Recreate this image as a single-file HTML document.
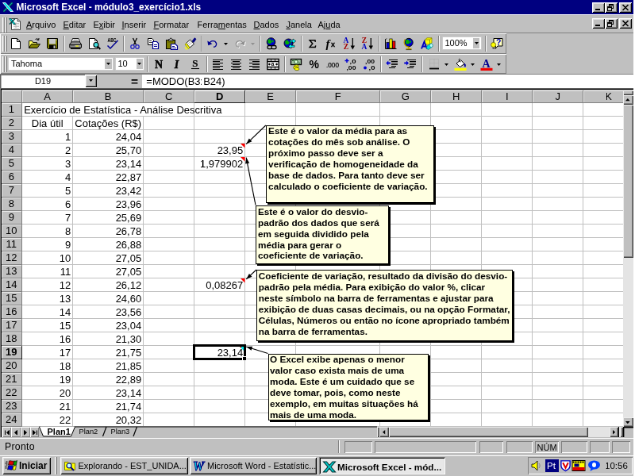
<!DOCTYPE html><html><head><meta charset="utf-8"><title>Microsoft Excel - módulo3_exercício1.xls</title><style>
*{box-sizing:border-box;margin:0;padding:0}
html,body{width:635px;height:476px;overflow:hidden;background:#c0c0c0}
#root{position:absolute;left:0;top:0;width:800px;height:600px;background:#c0c0c0;will-change:transform;transform-origin:0 0;transform:scale(0.79375,0.79333);font-family:"Liberation Sans",sans-serif;font-size:11px;color:#000;overflow:hidden}
.a{position:absolute}
.t{position:absolute;white-space:nowrap;line-height:13px}
.ui{font-size:11px}
.cell{position:absolute;white-space:nowrap;font-size:13px;line-height:17px;height:17px}
.hdr{position:absolute;background:#c0c0c0;border-right:1px solid #808080;border-bottom:1px solid #808080;font-size:13px;line-height:15px;text-align:center;box-shadow:inset 1px 1px 0 #e8e8e8}
.btn{position:absolute;background:#c0c0c0;box-shadow:inset 1px 1px 0 #fff, inset -1px -1px 0 #000, inset 2px 2px 0 #dfdfdf, inset -2px -2px 0 #808080}
.sunk{position:absolute;box-shadow:inset 1px 1px 0 #808080, inset -1px -1px 0 #fff}
.sunk2{position:absolute;box-shadow:inset 1px 1px 0 #808080, inset -1px -1px 0 #fff, inset 2px 2px 0 #000, inset -2px -2px 0 #dfdfdf}
.sep{position:absolute;width:2px;border-left:1px solid #808080;border-right:1px solid #fff}
.grip{position:absolute;width:3px;border-left:1px solid #fff;border-right:1px solid #808080;background:#c0c0c0}
.note{position:absolute;background:#ffffe1;border:1px solid #000;box-shadow:2px 2px 0 #000;font-weight:bold;font-size:11.75px;line-height:13.92px;white-space:nowrap}
.note div{position:absolute;left:2.3px;top:-1px}
u{text-decoration:underline}
svg{position:absolute;overflow:visible}
</style></head><body><div id="root">
<div class="a" style="left:0;top:0;width:800px;height:17.9px;background:#000080"></div>
<svg style="left:2px;top:1px" width="16" height="16" viewBox="0 0 16 16"><path d="M2.500 13.500 L13.500 2.500" stroke="#003838" stroke-width="2.600"/><path d="M2.500 13.500 L13.500 2.500" stroke="#00a0a0" stroke-width="1.300"/><path d="M1.500 2.500 L5 2.500 L14.500 13.500 L11 13.500 Z" fill="#00e8e8" stroke="#e8ffff" stroke-width="0.900"/></svg>
<div class="t" style="left:20.5px;top:2px;color:#fff;font-weight:bold;font-size:11.9px;line-height:14px">Microsoft Excel - módulo3_exercício1.xls</div>
<div class="btn" style="left:746.3px;top:2.5px;width:16px;height:13.0px"></div>
<div class="btn" style="left:762.3px;top:2.5px;width:16px;height:13.0px"></div>
<div class="btn" style="left:780.3px;top:2.5px;width:16px;height:13.0px"></div>
<div class="a" style="left:750.3px;top:10.5px;width:6px;height:2px;background:#000"></div>
<div class="a" style="left:767.3px;top:4.5px;width:6px;height:6px;border:1px solid #000;border-top-width:2px"></div>
<div class="a" style="left:765.3px;top:7.5px;width:6px;height:6px;border:1px solid #000;border-top-width:2px;background:#c0c0c0"></div>
<svg style="left:784.3px;top:5.5px" width="8" height="7" viewBox="0 0 8 7"><path d="M0.5 0 L7.5 7 M7.5 0 L0.5 7" stroke="#000" stroke-width="1.6" fill="none"/></svg>
<div class="a" style="left:0.00px;top:18.30px;width:800.00px;height:1.00px;background:#fff;"></div>
<div class="grip" style="left:3px;top:22px;height:19px"></div>
<div class="grip" style="left:6px;top:22px;height:19px"></div>
<svg style="left:11px;top:22px" width="16" height="16" viewBox="0 0 16 16"><path d="M3.500 1.500 L11 1.500 L14.500 5 L14.500 15.500 L3.500 15.500 Z" fill="#fff" stroke="#303030" stroke-width="0.900"/><path d="M11 1.500 L11 5 L14.500 5" fill="#c0c0c0" stroke="#303030" stroke-width="0.800"/><path d="M6 7.500h7M6 9.500h7M6 11.500h7M6 13.500h7M9 6v8" stroke="#b0b0b0" stroke-width="0.800"/><path d="M0.500 1.500 L3 1.500 L8.500 8.500 L6 8.500 Z" fill="#00e0e0" stroke="#004848" stroke-width="0.800"/><path d="M1 8.500 L8 1.500" stroke="#004848" stroke-width="1.500"/></svg>
<div class="t ui" style="left:33.0px;top:25px"><u>A</u>rquivo</div>
<div class="t ui" style="left:79.5px;top:25px"><u>E</u>ditar</div>
<div class="t ui" style="left:117.5px;top:25px">E<u>x</u>ibir</div>
<div class="t ui" style="left:153.5px;top:25px"><u>I</u>nserir</div>
<div class="t ui" style="left:193.5px;top:25px"><u>F</u>ormatar</div>
<div class="t ui" style="left:248.5px;top:25px">Ferra<u>m</u>entas</div>
<div class="t ui" style="left:319.5px;top:25px"><u>D</u>ados</div>
<div class="t ui" style="left:360.5px;top:25px"><u>J</u>anela</div>
<div class="t ui" style="left:400.5px;top:25px">Aj<u>u</u>da</div>
<div class="btn" style="left:746.3px;top:22.5px;width:16px;height:13.0px"></div>
<div class="btn" style="left:762.3px;top:22.5px;width:16px;height:13.0px"></div>
<div class="btn" style="left:780.3px;top:22.5px;width:16px;height:13.0px"></div>
<div class="a" style="left:750.3px;top:30.5px;width:6px;height:2px;background:#000"></div>
<div class="a" style="left:767.3px;top:24.5px;width:6px;height:6px;border:1px solid #000;border-top-width:2px"></div>
<div class="a" style="left:765.3px;top:27.5px;width:6px;height:6px;border:1px solid #000;border-top-width:2px;background:#c0c0c0"></div>
<svg style="left:784.3px;top:25.5px" width="8" height="7" viewBox="0 0 8 7"><path d="M0.5 0 L7.5 7 M7.5 0 L0.5 7" stroke="#000" stroke-width="1.6" fill="none"/></svg>
<div class="a" style="left:0.00px;top:41.00px;width:800.00px;height:1.00px;background:#808080;"></div>
<div class="a" style="left:0px;top:42px;width:638px;height:26px;box-shadow:inset 1px 1px 0 #fff, inset -1px -1px 0 #808080"></div>
<div class="a" style="left:0px;top:68px;width:638px;height:25px;box-shadow:inset 1px 1px 0 #fff, inset -1px -1px 0 #808080"></div>
<div class="grip" style="left:3px;top:45px;height:20px"></div>
<div class="grip" style="left:6px;top:45px;height:20px"></div>
<div class="grip" style="left:3px;top:71px;height:20px"></div>
<div class="grip" style="left:6px;top:71px;height:20px"></div>
<svg style="left:12.0px;top:47.0px" width="16" height="16" viewBox="0 0 16 16"><path d="M2.500 1.500 L9.500 1.500 L13.500 5.500 L13.500 14.500 L2.500 14.500 Z" fill="#fff" stroke="#000"/><path d="M9.500 1.500 L9.500 5.500 L13.500 5.500" fill="none" stroke="#000"/></svg>
<svg style="left:35.0px;top:47.0px" width="16" height="16" viewBox="0 0 16 16"><path d="M1.500 4.500 L1.500 13.500 L11.500 13.500 L11.500 6.500 L6.500 6.500 L5.500 4.500 Z" fill="#ffff60" stroke="#000" stroke-width="0.9"/><path d="M1.500 13.500 L4.500 8.500 L15.500 8.500 L12 13.500 Z" fill="#808000" stroke="#000" stroke-width="0.9"/><path d="M9.500 3 C10.500 1.300 12.500 1.300 13.500 3.200 M14 1 L13.700 3.600 L11.300 3.200" fill="none" stroke="#000" stroke-width="1"/></svg>
<svg style="left:58.0px;top:47.0px" width="16" height="16" viewBox="0 0 16 16"><path d="M1.500 1.500 L14.500 1.500 L14.500 14.500 L2.500 14.500 L1.500 13.500 Z" fill="#808000" stroke="#000"/><rect x="4" y="2" width="8" height="6.500" fill="#c8c8c8"/><rect x="12.500" y="2.500" width="1" height="1.500" fill="#c0c0c0"/><rect x="4" y="9.500" width="8.500" height="5" fill="#000"/><rect x="9.500" y="10.500" width="2" height="3.500" fill="#c0c0c0"/></svg>
<div class="sep" style="left:80px;top:45px;height:20px"></div>
<svg style="left:87.0px;top:47.0px" width="16" height="16" viewBox="0 0 16 16"><path d="M4.500 1.500 L12 1.500 L13.500 6 L3 6 Z" fill="#fff" stroke="#000" stroke-width="0.9"/><path d="M5.500 3.200h5.500M5.200 4.600h6.300" stroke="#808080" stroke-width="0.8"/><path d="M3 6 L13.500 6 L15.500 9 L0.800 9 Z" fill="#c0c0c0" stroke="#000" stroke-width="0.9"/><path d="M0.800 9 L15.500 9 L15.500 13 L0.800 13 Z" fill="#a0a0a0" stroke="#000" stroke-width="1"/><path d="M2 14.200 L14.500 14.200" stroke="#000" stroke-width="1.600"/><rect x="8.500" y="10.500" width="3.500" height="1.200" fill="#ffff00"/><path d="M2 10.700 h5" stroke="#404040" stroke-width="0.8"/></svg>
<svg style="left:110.0px;top:47.0px" width="16" height="16" viewBox="0 0 16 16"><path d="M2.500 1.500 L9.500 1.500 L12.500 4.500 L12.500 14.500 L2.500 14.500 Z" fill="#fff" stroke="#000"/><path d="M9.500 1.500 L9.500 4.500 L12.500 4.500" fill="none" stroke="#000" stroke-width="0.8"/><circle cx="11" cy="9.500" r="3" fill="#40e0e0" stroke="#000" stroke-width="1.100"/><path d="M13.200 11.800 L16.300 15" stroke="#000" stroke-width="2"/></svg>
<svg style="left:133.0px;top:47.0px" width="16" height="16" viewBox="0 0 16 16"><text x="2.500" y="6.500" font-size="6.500" font-family="Liberation Sans,sans-serif" font-weight="bold" fill="#000" textLength="11" lengthAdjust="spacingAndGlyphs">ABC</text><path d="M2.500 10.500 L6 14 L15.500 4" fill="none" stroke="#000090" stroke-width="1.500"/></svg>
<div class="sep" style="left:155px;top:45px;height:20px"></div>
<svg style="left:162.0px;top:47.0px" width="16" height="16" viewBox="0 0 16 16"><path d="M5.500 1 L9.500 9.500 M10.500 1 L6.500 9.500" stroke="#000" stroke-width="1.300" fill="none"/><ellipse cx="5" cy="12" rx="2.200" ry="2.300" fill="none" stroke="#2020c0" stroke-width="1.300"/><ellipse cx="11" cy="12" rx="2.200" ry="2.300" fill="none" stroke="#2020c0" stroke-width="1.300"/></svg>
<svg style="left:185.0px;top:47.0px" width="16" height="16" viewBox="0 0 16 16"><path d="M1.500 1.500 L6.500 1.500 L8.500 3.500 L8.500 9.500 L1.500 9.500 Z" fill="#fff" stroke="#000"/><path d="M3 4.500h3M3 6.500h4" stroke="#000" stroke-width="0.800"/><path d="M7.500 5.500 L12.500 5.500 L14.500 7.500 L14.500 14.500 L7.500 14.500 Z" fill="#fff" stroke="#000090" stroke-width="1.200"/><path d="M9 9.500h4M9 11.500h4" stroke="#000090"/></svg>
<svg style="left:208.0px;top:47.0px" width="16" height="16" viewBox="0 0 16 16"><path d="M1.500 3.500 L12.500 3.500 L12.500 14.500 L1.500 14.500 Z" fill="#808000" stroke="#000" stroke-width="1.100"/><path d="M4.500 4.500 L4.500 2.500 L6 2.500 L6.500 1.200 L8 1.200 L8.500 2.500 L10 2.500 L10 4.500 Z" fill="#c0c0c0" stroke="#000" stroke-width="0.800"/><path d="M3 6h7" stroke="#505000" stroke-width="0.800"/><path d="M7.500 8.500 L13 8.500 L15.500 11 L15.500 15.500 L7.500 15.500 Z" fill="#fff" stroke="#000090" stroke-width="1.200"/><path d="M9 11.500h3M9 13.500h5" stroke="#000090"/></svg>
<svg style="left:231.0px;top:47.0px" width="16" height="16" viewBox="0 0 16 16"><path d="M11 5 L14.200 0.800 L16 2.200 L13 6.500 Z" fill="#000080" stroke="#000080" stroke-width="0.800"/><path d="M3.500 7.500 L8.500 3 L13.500 8.500 L8 13 Z" fill="#fff" stroke="#000" stroke-width="0.900"/><path d="M5 9 L9.500 5 M6.500 10.500 L11 6.500" stroke="#808080" stroke-width="0.700"/><path d="M3.500 7.500 L8 13 L6.500 14.500 L2 9 Z" fill="#ffff00" stroke="#808000" stroke-width="0.800"/><path d="M2 12.500 L5 15.500" stroke="#ffff00" stroke-width="1.400"/></svg>
<div class="sep" style="left:253px;top:45px;height:20px"></div>
<svg style="left:260.0px;top:47.0px" width="16" height="16" viewBox="0 0 16 16"><path d="M3.500 8.500 C5 3.500 11 3.500 12.500 7.500 C13.200 10 11.500 12.200 9 12.300" fill="none" stroke="#000090" stroke-width="1.400"/><path d="M1.300 4.500 L2.300 10.200 L7.500 8.300 Z" fill="#000090"/></svg>
<svg style="left:282.0px;top:54.0px" width="5" height="3" viewBox="0 0 5 3"><path d="M0 0 L5 0 L2.5 3 Z" fill="#000"/></svg>
<svg style="left:294.0px;top:47.0px" width="16" height="16" viewBox="0 0 16 16"><path d="M13.500 9.500 C12 4.500 6 4.500 4.500 8.500 C3.800 11 5.500 13.200 8 13.300" fill="none" stroke="#fff" stroke-width="1.400"/><path d="M15.700 5.500 L14.700 11.200 L9.500 9.300 Z" fill="#fff"/><path d="M12.500 8.500 C11 3.500 5 3.500 3.500 7.500 C2.800 10 4.500 12.200 7 12.300" fill="none" stroke="#909090" stroke-width="1.400"/><path d="M14.700 4.500 L13.700 10.200 L8.500 8.300 Z" fill="#909090"/></svg>
<svg style="left:316.0px;top:54.0px" width="5" height="3" viewBox="0 0 5 3"><path d="M0 0 L5 0 L2.5 3 Z" fill="#909090"/></svg>
<div class="sep" style="left:327px;top:45px;height:20px"></div>
<svg style="left:334.0px;top:47.0px" width="16" height="16" viewBox="0 0 16 16"><circle cx="7.5" cy="6" r="5.3" fill="#0000d0" stroke="#000" stroke-width="0.9"/><path d="M4.585 2.714 c1.8 -1.2 3.6 0.2 3 2 c2 0.6 0.4 3.400 -1.400 3 c-1.400 0.8 -3.200 -0.6 -2.600 -2.200 c-0.8 -1 -0.2 -2.200 1 -2.800 Z" fill="#00b000"/><path d="M8.825 3.085 l2 1.300 l-0.500 2.400 l-1.700 -1.200 Z" fill="#00b000"/><rect x="3" y="10.500" width="6" height="4.200" rx="1.800" fill="#c0c0c0" stroke="#000" stroke-width="1.300"/><rect x="8" y="10.500" width="6" height="4.200" rx="1.800" fill="#c0c0c0" stroke="#000" stroke-width="1.300"/></svg>
<svg style="left:357.0px;top:47.0px" width="16" height="16" viewBox="0 0 16 16"><circle cx="6.5" cy="7.5" r="5.5" fill="#0000d0" stroke="#000" stroke-width="0.9"/><path d="M3.475 4.09 c1.8 -1.2 3.6 0.2 3 2 c2 0.6 0.4 3.400 -1.400 3 c-1.400 0.8 -3.200 -0.6 -2.600 -2.200 c-0.8 -1 -0.2 -2.200 1 -2.800 Z" fill="#00b000"/><path d="M7.875 4.475 l2 1.300 l-0.500 2.400 l-1.700 -1.200 Z" fill="#00b000"/><path d="M8 3.800 L12 3.800 L12 2 L15.800 4.800 L12 7.600 L12 5.800 L8 5.800 Z" fill="#00ffff" stroke="#000" stroke-width="0.600"/><path d="M14 10.300 L10 10.300 L10 8.500 L6.200 11.300 L10 14.100 L10 12.300 L14 12.300 Z" fill="#00ffff" stroke="#000" stroke-width="0.600"/></svg>
<div class="sep" style="left:379px;top:45px;height:20px"></div>
<svg style="left:386.0px;top:47.0px" width="16" height="16" viewBox="0 0 16 16"><path d="M11.300 5.800 L11 3.800 L4.200 3.800 L7.800 8 L4.200 12.400 L11.200 12.400 L11.700 10.300" fill="none" stroke="#000" stroke-width="1.500" stroke-linejoin="miter"/></svg>
<svg style="left:409.0px;top:47.0px" width="16" height="16" viewBox="0 0 16 16"><text x="1.500" y="12.500" font-size="15" font-family="Liberation Serif,serif" font-style="italic" font-weight="bold" fill="#000">f</text><text x="8" y="12.500" font-size="9" font-family="Liberation Sans,sans-serif" font-weight="bold" fill="#000" stroke="#000" stroke-width="0.300">x</text></svg>
<svg style="left:432.0px;top:47.0px" width="16" height="16" viewBox="0 0 16 16"><text x="0.500" y="7.300" font-size="9.500" font-family="Liberation Serif,serif" font-weight="bold" fill="#0000c0">A</text><text x="0.800" y="15.300" font-size="9.500" font-family="Liberation Serif,serif" font-weight="bold" fill="#a00000">Z</text><path d="M12.300 1 L12.300 12" stroke="#000" stroke-width="1.300"/><path d="M9.600 10.500 L15 10.500 L12.300 15.500 Z" fill="#000"/></svg>
<svg style="left:455.0px;top:47.0px" width="16" height="16" viewBox="0 0 16 16"><text x="0.800" y="7.300" font-size="9.500" font-family="Liberation Serif,serif" font-weight="bold" fill="#a00000">Z</text><text x="0.500" y="15.300" font-size="9.500" font-family="Liberation Serif,serif" font-weight="bold" fill="#0000c0">A</text><path d="M12.300 1 L12.300 12" stroke="#000" stroke-width="1.300"/><path d="M9.600 10.500 L15 10.500 L12.300 15.500 Z" fill="#000"/></svg>
<div class="sep" style="left:477px;top:45px;height:20px"></div>
<svg style="left:484.0px;top:47.0px" width="16" height="16" viewBox="0 0 16 16"><path d="M1.500 3 L3 1.500 M1.500 2.500 L1.500 14.500 L15.500 14.500" stroke="#000" fill="none"/><rect x="3" y="6.500" width="3.300" height="7.500" fill="#0000d0" stroke="#000" stroke-width="0.700"/><rect x="6.800" y="2" width="3.300" height="12" fill="#ffff00" stroke="#000" stroke-width="0.700"/><rect x="10.600" y="5" width="3.300" height="9" fill="#f00000" stroke="#000" stroke-width="0.700"/></svg>
<svg style="left:507.0px;top:47.0px" width="16" height="16" viewBox="0 0 16 16"><circle cx="8" cy="6.5" r="5.2" fill="#0000d0" stroke="#000" stroke-width="0.9"/><path d="M5.14 3.276 c1.8 -1.2 3.6 0.2 3 2 c2 0.6 0.4 3.400 -1.400 3 c-1.400 0.8 -3.200 -0.6 -2.600 -2.200 c-0.8 -1 -0.2 -2.200 1 -2.800 Z" fill="#00b000"/><path d="M9.3 3.64 l2 1.300 l-0.500 2.400 l-1.700 -1.200 Z" fill="#00b000"/><path d="M3.200 2.500 C0.800 7 3 12 8.500 12.300" fill="none" stroke="#c0a000" stroke-width="1.300"/><path d="M8 12 L8 14" stroke="#c0a000" stroke-width="2"/><path d="M4.500 14.700 L11.500 14.700" stroke="#c0a000" stroke-width="1.800"/><path d="M4.500 15.600 L11.500 15.600" stroke="#000" stroke-width="0.600"/></svg>
<svg style="left:530.0px;top:47.0px" width="16" height="16" viewBox="0 0 16 16"><path d="M5.500 3 L8 0.800 L14 0.800 L14 7 L11.500 9 L5.500 9 Z" fill="#ffff00" stroke="#808000" stroke-width="0.800"/><path d="M5.500 3 L11.500 3 L11.500 9 M11.500 3 L14 0.800" fill="none" stroke="#808000" stroke-width="0.800"/><path d="M1 14.500 L4.500 5.500 L8 14.500 M2.300 11.500 L6.800 11.500" fill="none" stroke="#0000c0" stroke-width="1.900"/><path d="M8 11 L12.500 8 C15 8 16 11 14 12.500 L9.500 15.500 C7.500 15 7 12.500 8 11 Z" fill="#00e0e0" stroke="#008080" stroke-width="0.700"/><ellipse cx="13.300" cy="10.300" rx="1.800" ry="2.300" fill="#c0ffff" stroke="#008080" stroke-width="0.500"/></svg>
<div class="sep" style="left:552px;top:45px;height:20px"></div>
<div class="a" style="left:557.70px;top:47.00px;width:48.00px;height:14.80px;background:#fff;box-shadow:0 0 0 0.6px #d4d4d4"></div>
<div class="a" style="left:595.90px;top:48.00px;width:8.60px;height:12.80px;background:#c0c0c0;"></div>
<svg style="left:597.7px;top:53.0px" width="5" height="3" viewBox="0 0 5 3"><path d="M0 0 L5 0 L2.5 3 Z" fill="#000"/></svg>
<div class="t" style="left:560.50px;top:48.00px;font-size:11px;line-height:13px">100%</div>
<div class="sep" style="left:611px;top:45px;height:20px"></div>
<svg style="left:617.5px;top:47.0px" width="16" height="16" viewBox="0 0 16 16"><path d="M4 1.500 L15 1.500 L15 11 L9 11 L6 14.500 L6.500 11 L4 11 Z" fill="#ffffc0" stroke="#000" stroke-width="1"/><text x="7" y="9.800" font-size="10.500" font-family="Liberation Sans,sans-serif" font-weight="bold" fill="#0000c0">?</text><circle cx="3.600" cy="9.500" r="3" fill="#ffff00" stroke="#606000" stroke-width="0.800"/><path d="M2.300 12.500 L5 12.500 L4.600 15 L2.700 15 Z" fill="#606060"/></svg>
<div class="a" style="left:11.00px;top:73.00px;width:131.00px;height:14.80px;background:#fff;box-shadow:0 0 0 0.6px #d4d4d4"></div>
<div class="a" style="left:132.20px;top:74.00px;width:8.60px;height:12.80px;background:#c0c0c0;"></div>
<svg style="left:134.0px;top:79.0px" width="5" height="3" viewBox="0 0 5 3"><path d="M0 0 L5 0 L2.5 3 Z" fill="#000"/></svg>
<div class="t" style="left:14.00px;top:74.00px;font-size:11px;line-height:13px">Tahoma</div>
<div class="a" style="left:145.80px;top:73.00px;width:35.60px;height:14.80px;background:#fff;box-shadow:0 0 0 0.6px #d4d4d4"></div>
<div class="a" style="left:171.60px;top:74.00px;width:8.60px;height:12.80px;background:#c0c0c0;"></div>
<svg style="left:173.4px;top:79.0px" width="5" height="3" viewBox="0 0 5 3"><path d="M0 0 L5 0 L2.5 3 Z" fill="#000"/></svg>
<div class="t" style="left:148.50px;top:74.00px;font-size:11px;line-height:13px">10</div>
<div class="sep" style="left:185px;top:71px;height:20px"></div>
<svg style="left:191.5px;top:73.0px" width="16" height="16" viewBox="0 0 16 16"><text x="3" y="12.500" font-size="14" font-family="Liberation Serif,serif" font-weight="bold" fill="#000" stroke="#000" stroke-width="0.500">N</text></svg>
<svg style="left:214.5px;top:73.0px" width="16" height="16" viewBox="0 0 16 16"><text x="4.800" y="12.500" font-size="14" font-family="Liberation Serif,serif" font-weight="bold" font-style="italic" fill="#000" stroke="#000" stroke-width="0.500">I</text></svg>
<svg style="left:237.5px;top:73.0px" width="16" height="16" viewBox="0 0 16 16"><text x="4.300" y="11.500" font-size="13" font-family="Liberation Serif,serif" font-weight="bold" fill="#000" stroke="#000" stroke-width="0.200">S</text><path d="M3 13.500 L13 13.500" stroke="#000" stroke-width="1.100"/></svg>
<div class="sep" style="left:260px;top:71px;height:20px"></div>
<svg style="left:266.5px;top:73.0px" width="16" height="16" viewBox="0 0 16 16"><path d="M1 2.5h13M1 4.5h9M1 6.5h13M1 8.5h9M1 10.5h13M1 12.5h9M1 14.5h13" stroke="#000" stroke-width="1.150"/></svg>
<svg style="left:289.5px;top:73.0px" width="16" height="16" viewBox="0 0 16 16"><path d="M1 2.5h13M3 4.5h9M1 6.5h13M3 8.5h9M1 10.5h13M3 12.5h9M1 14.5h13" stroke="#000" stroke-width="1.150"/></svg>
<svg style="left:312.5px;top:73.0px" width="16" height="16" viewBox="0 0 16 16"><path d="M1 2.5h13M5 4.5h9M1 6.5h13M5 8.5h9M1 10.5h13M5 12.5h9M1 14.5h13" stroke="#000" stroke-width="1.150"/></svg>
<svg style="left:335.5px;top:73.0px" width="16" height="16" viewBox="0 0 16 16"><rect x="0.800" y="1.500" width="14.400" height="13" fill="#fff" stroke="#000" stroke-width="1.400"/><path d="M1 4.500h14M1 11.500h14" stroke="#000" stroke-width="1.300"/><path d="M5.500 1.500v3M10.500 1.500v3M5.500 11.500v3M10.500 11.500v3" stroke="#000" stroke-width="0.800"/><text x="5.800" y="10.300" font-size="6.500" font-family="Liberation Sans,sans-serif" font-weight="bold" fill="#000">a</text><path d="M2 8 L5.300 8 M10.700 8 L14 8" stroke="#000" stroke-width="1.200"/><path d="M4 6.200 L2 8 L4 9.800 Z M12 6.200 L14 8 L12 9.800 Z" fill="#000"/></svg>
<div class="sep" style="left:358px;top:71px;height:20px"></div>
<svg style="left:364.5px;top:73.0px" width="16" height="16" viewBox="0 0 16 16"><rect x="1.500" y="1.500" width="13" height="7" fill="#a0c0a0" stroke="#000" stroke-width="1.300"/><ellipse cx="8" cy="5" rx="2.200" ry="2.300" fill="#e0ffe0" stroke="#004000" stroke-width="0.800"/><path d="M3 3.500h2M11 6.500h2" stroke="#004000" stroke-width="0.800"/><ellipse cx="8.500" cy="10.500" rx="3" ry="1.700" fill="#ffff00" stroke="#606000" stroke-width="0.800"/><ellipse cx="7.500" cy="12.300" rx="3" ry="1.700" fill="#ffff00" stroke="#606000" stroke-width="0.800"/><ellipse cx="9" cy="14" rx="3" ry="1.700" fill="#ffff00" stroke="#606000" stroke-width="0.800"/></svg>
<svg style="left:387.5px;top:73.0px" width="16" height="16" viewBox="0 0 16 16"><text x="1.500" y="13" font-size="14" font-family="Liberation Sans,sans-serif" font-weight="bold" fill="#000">%</text></svg>
<svg style="left:410.5px;top:73.0px" width="16" height="16" viewBox="0 0 16 16"><text x="0" y="12" font-size="9.700" font-family="Liberation Sans,sans-serif" fill="#000" stroke="#000" stroke-width="0.250" textLength="16" lengthAdjust="spacingAndGlyphs">.000</text></svg>
<svg style="left:433.5px;top:73.0px" width="16" height="16" viewBox="0 0 16 16"><text x="6.500" y="7.300" font-size="8" font-family="Liberation Sans,sans-serif" fill="#000" font-weight="bold" textLength="8" lengthAdjust="spacingAndGlyphs">,0</text><text x="2.500" y="15" font-size="8" font-family="Liberation Sans,sans-serif" fill="#000" font-weight="bold" textLength="12" lengthAdjust="spacingAndGlyphs">,00</text><path d="M0.500 3.500 L5.500 3.500 M3 1 L3 6" stroke="#0000d0" fill="none" stroke-width="1.500"/></svg>
<svg style="left:456.5px;top:73.0px" width="16" height="16" viewBox="0 0 16 16"><text x="3" y="7.300" font-size="8" font-family="Liberation Sans,sans-serif" fill="#000" font-weight="bold" textLength="12" lengthAdjust="spacingAndGlyphs">,00</text><text x="7.500" y="15" font-size="8" font-family="Liberation Sans,sans-serif" fill="#000" font-weight="bold" textLength="8" lengthAdjust="spacingAndGlyphs">,0</text><circle cx="3" cy="12.500" r="1.900" fill="#0000d0"/></svg>
<div class="sep" style="left:479px;top:71px;height:20px"></div>
<svg style="left:485.5px;top:73.0px" width="16" height="16" viewBox="0 0 16 16"><path d="M4 2.500h11M7 4.500h8M7 6.500h8M7 8.500h8M7 10.500h6M4 12.500h8" stroke="#000" stroke-width="1.150"/><path d="M0.300 6.500 L3.300 3.500 L3.300 5.500 L6 5.500 L6 7.500 L3.300 7.500 L3.300 9.500 Z" fill="#0000d0"/></svg>
<svg style="left:508.5px;top:73.0px" width="16" height="16" viewBox="0 0 16 16"><path d="M4 2.500h11M7 4.500h8M7 6.500h8M7 8.500h8M7 10.500h6M4 12.500h8" stroke="#000" stroke-width="1.150"/><path d="M6 6.500 L3 3.500 L3 5.500 L0.300 5.500 L0.300 7.500 L3 7.500 L3 9.500 Z" fill="#0000d0"/></svg>
<div class="sep" style="left:531px;top:71px;height:20px"></div>
<svg style="left:539.0px;top:73.0px" width="16" height="16" viewBox="0 0 16 16"><rect x="2.500" y="1.500" width="11" height="10" fill="none" stroke="#a8a8a8" stroke-dasharray="1 1"/><path d="M8 1.500v10M2.500 6.500h11" stroke="#a8a8a8" stroke-dasharray="1 1"/><path d="M2 13.500h12" stroke="#000" stroke-width="1.800"/></svg>
<svg style="left:560.0px;top:80.0px" width="5" height="3" viewBox="0 0 5 3"><path d="M0 0 L5 0 L2.5 3 Z" fill="#000"/></svg>
<svg style="left:572.0px;top:73.0px" width="16" height="16" viewBox="0 0 16 16"><path d="M3 7 L8.500 2.500 L13 7.500 L7.500 11.500 Z" fill="#fff" stroke="#000" stroke-width="1"/><path d="M7 0.800 C5.500 2.500 6.500 4.500 8.500 5" fill="none" stroke="#000" stroke-width="1"/><path d="M13 7 C14.800 7.800 15 10 14 11.500 C13 10.500 12.800 9 13 7 Z" fill="#0000c0" stroke="#000080" stroke-width="0.600"/><rect x="0.500" y="12.800" width="15" height="3.200" fill="#ffff00"/></svg>
<svg style="left:593.0px;top:80.0px" width="5" height="3" viewBox="0 0 5 3"><path d="M0 0 L5 0 L2.5 3 Z" fill="#000"/></svg>
<svg style="left:605.0px;top:73.0px" width="16" height="16" viewBox="0 0 16 16"><text x="2.500" y="11.500" font-size="14" font-family="Liberation Serif,serif" font-weight="bold" fill="#000090">A</text><rect x="0.500" y="12.800" width="15" height="3.200" fill="#f00000"/></svg>
<svg style="left:626.0px;top:80.0px" width="5" height="3" viewBox="0 0 5 3"><path d="M0 0 L5 0 L2.5 3 Z" fill="#000"/></svg>
<div class="a" style="left:0.00px;top:93.00px;width:800.00px;height:1.00px;background:#808080;"></div>
<div class="a" style="left:0.00px;top:94.00px;width:800.00px;height:17.00px;background:#c0c0c0;"></div>
<div class="a" style="left:0.00px;top:94.00px;width:122.00px;height:17.00px;background:#fff;box-shadow:inset 1.5px 1px 0 #606060"></div>
<div class="t" style="left:0;top:96px;width:108px;text-align:center">D19</div>
<div class="btn" style="left:107px;top:94px;width:15px;height:16px"></div>
<svg style="left:112.0px;top:100.0px" width="5" height="3" viewBox="0 0 5 3"><path d="M0 0 L5 0 L2.5 3 Z" fill="#000"/></svg>
<div class="t" style="left:165px;top:95px;font-weight:bold;font-size:15.5px;line-height:15px">=</div>
<div class="a" style="left:179.30px;top:94.00px;width:622.00px;height:17.00px;background:#fff;"></div>
<div class="t" style="left:184.3px;top:95px;font-size:13px;line-height:15px">=MODO(B3:B24)</div>
<div class="a" style="left:0.00px;top:111.00px;width:800.00px;height:1.00px;background:#606060;"></div>
<div class="a" style="left:0.00px;top:112.00px;width:800.00px;height:1.00px;background:#000;"></div>
<div class="a" style="left:0.00px;top:113.50px;width:784.60px;height:424.72px;background:#fff;"></div>
<div class="a" style="left:91.20px;top:129.50px;width:1.00px;height:408.72px;background:#c0c0c0;"></div>
<div class="a" style="left:180.20px;top:129.50px;width:1.00px;height:408.72px;background:#c0c0c0;"></div>
<div class="a" style="left:244.20px;top:129.50px;width:1.00px;height:408.72px;background:#c0c0c0;"></div>
<div class="a" style="left:308.20px;top:129.50px;width:1.00px;height:408.72px;background:#c0c0c0;"></div>
<div class="a" style="left:372.20px;top:129.50px;width:1.00px;height:408.72px;background:#c0c0c0;"></div>
<div class="a" style="left:478.20px;top:129.50px;width:1.00px;height:408.72px;background:#c0c0c0;"></div>
<div class="a" style="left:542.20px;top:129.50px;width:1.00px;height:408.72px;background:#c0c0c0;"></div>
<div class="a" style="left:606.20px;top:129.50px;width:1.00px;height:408.72px;background:#c0c0c0;"></div>
<div class="a" style="left:670.20px;top:129.50px;width:1.00px;height:408.72px;background:#c0c0c0;"></div>
<div class="a" style="left:734.20px;top:129.50px;width:1.00px;height:408.72px;background:#c0c0c0;"></div>
<div class="a" style="left:798.20px;top:129.50px;width:1.00px;height:408.72px;background:#c0c0c0;"></div>
<div class="a" style="left:28.20px;top:145.53px;width:756.40px;height:1.00px;background:#c0c0c0;"></div>
<div class="a" style="left:28.20px;top:162.56px;width:756.40px;height:1.00px;background:#c0c0c0;"></div>
<div class="a" style="left:28.20px;top:179.59px;width:756.40px;height:1.00px;background:#c0c0c0;"></div>
<div class="a" style="left:28.20px;top:196.62px;width:756.40px;height:1.00px;background:#c0c0c0;"></div>
<div class="a" style="left:28.20px;top:213.65px;width:756.40px;height:1.00px;background:#c0c0c0;"></div>
<div class="a" style="left:28.20px;top:230.68px;width:756.40px;height:1.00px;background:#c0c0c0;"></div>
<div class="a" style="left:28.20px;top:247.71px;width:756.40px;height:1.00px;background:#c0c0c0;"></div>
<div class="a" style="left:28.20px;top:264.74px;width:756.40px;height:1.00px;background:#c0c0c0;"></div>
<div class="a" style="left:28.20px;top:281.77px;width:756.40px;height:1.00px;background:#c0c0c0;"></div>
<div class="a" style="left:28.20px;top:298.80px;width:756.40px;height:1.00px;background:#c0c0c0;"></div>
<div class="a" style="left:28.20px;top:315.83px;width:756.40px;height:1.00px;background:#c0c0c0;"></div>
<div class="a" style="left:28.20px;top:332.86px;width:756.40px;height:1.00px;background:#c0c0c0;"></div>
<div class="a" style="left:28.20px;top:349.89px;width:756.40px;height:1.00px;background:#c0c0c0;"></div>
<div class="a" style="left:28.20px;top:366.92px;width:756.40px;height:1.00px;background:#c0c0c0;"></div>
<div class="a" style="left:28.20px;top:383.95px;width:756.40px;height:1.00px;background:#c0c0c0;"></div>
<div class="a" style="left:28.20px;top:400.98px;width:756.40px;height:1.00px;background:#c0c0c0;"></div>
<div class="a" style="left:28.20px;top:418.01px;width:756.40px;height:1.00px;background:#c0c0c0;"></div>
<div class="a" style="left:28.20px;top:435.04px;width:756.40px;height:1.00px;background:#c0c0c0;"></div>
<div class="a" style="left:28.20px;top:452.07px;width:756.40px;height:1.00px;background:#c0c0c0;"></div>
<div class="a" style="left:28.20px;top:469.10px;width:756.40px;height:1.00px;background:#c0c0c0;"></div>
<div class="a" style="left:28.20px;top:486.13px;width:756.40px;height:1.00px;background:#c0c0c0;"></div>
<div class="a" style="left:28.20px;top:503.16px;width:756.40px;height:1.00px;background:#c0c0c0;"></div>
<div class="a" style="left:28.20px;top:520.19px;width:756.40px;height:1.00px;background:#c0c0c0;"></div>
<div class="a" style="left:28.20px;top:537.22px;width:756.40px;height:1.00px;background:#c0c0c0;"></div>
<div class="hdr" style="left:2.00px;top:113.50px;width:25.70px;height:16.00px;"></div>
<div class="hdr" style="left:28.20px;top:113.50px;width:64.00px;height:16.00px;line-height:15px;">A</div>
<div class="hdr" style="left:92.20px;top:113.50px;width:89.00px;height:16.00px;line-height:15px;">B</div>
<div class="hdr" style="left:181.20px;top:113.50px;width:64.00px;height:16.00px;line-height:15px;">C</div>
<div class="hdr" style="left:245.20px;top:113.50px;width:64.00px;height:16.00px;font-weight:bold;border-color:#202020;box-shadow:inset 1px 1px 0 #fff;line-height:15px;">D</div>
<div class="hdr" style="left:309.20px;top:113.50px;width:64.00px;height:16.00px;line-height:15px;">E</div>
<div class="hdr" style="left:373.20px;top:113.50px;width:106.00px;height:16.00px;line-height:15px;">F</div>
<div class="hdr" style="left:479.20px;top:113.50px;width:64.00px;height:16.00px;line-height:15px;">G</div>
<div class="hdr" style="left:543.20px;top:113.50px;width:64.00px;height:16.00px;line-height:15px;">H</div>
<div class="hdr" style="left:607.20px;top:113.50px;width:64.00px;height:16.00px;line-height:15px;">I</div>
<div class="hdr" style="left:671.20px;top:113.50px;width:64.00px;height:16.00px;line-height:15px;">J</div>
<div class="hdr" style="left:735.20px;top:113.50px;width:64.00px;height:16.00px;line-height:15px;">K</div>
<div class="hdr" style="left:2.00px;top:129.50px;width:25.70px;height:17.03px;line-height:16.6px;">1</div>
<div class="hdr" style="left:2.00px;top:146.53px;width:25.70px;height:17.03px;line-height:16.6px;">2</div>
<div class="hdr" style="left:2.00px;top:163.56px;width:25.70px;height:17.03px;line-height:16.6px;">3</div>
<div class="hdr" style="left:2.00px;top:180.59px;width:25.70px;height:17.03px;line-height:16.6px;">4</div>
<div class="hdr" style="left:2.00px;top:197.62px;width:25.70px;height:17.03px;line-height:16.6px;">5</div>
<div class="hdr" style="left:2.00px;top:214.65px;width:25.70px;height:17.03px;line-height:16.6px;">6</div>
<div class="hdr" style="left:2.00px;top:231.68px;width:25.70px;height:17.03px;line-height:16.6px;">7</div>
<div class="hdr" style="left:2.00px;top:248.71px;width:25.70px;height:17.03px;line-height:16.6px;">8</div>
<div class="hdr" style="left:2.00px;top:265.74px;width:25.70px;height:17.03px;line-height:16.6px;">9</div>
<div class="hdr" style="left:2.00px;top:282.77px;width:25.70px;height:17.03px;line-height:16.6px;">10</div>
<div class="hdr" style="left:2.00px;top:299.80px;width:25.70px;height:17.03px;line-height:16.6px;">11</div>
<div class="hdr" style="left:2.00px;top:316.83px;width:25.70px;height:17.03px;line-height:16.6px;">12</div>
<div class="hdr" style="left:2.00px;top:333.86px;width:25.70px;height:17.03px;line-height:16.6px;">13</div>
<div class="hdr" style="left:2.00px;top:350.89px;width:25.70px;height:17.03px;line-height:16.6px;">14</div>
<div class="hdr" style="left:2.00px;top:367.92px;width:25.70px;height:17.03px;line-height:16.6px;">15</div>
<div class="hdr" style="left:2.00px;top:384.95px;width:25.70px;height:17.03px;line-height:16.6px;">16</div>
<div class="hdr" style="left:2.00px;top:401.98px;width:25.70px;height:17.03px;line-height:16.6px;">17</div>
<div class="hdr" style="left:2.00px;top:419.01px;width:25.70px;height:17.03px;line-height:16.6px;">18</div>
<div class="hdr" style="left:2.00px;top:436.04px;width:25.70px;height:17.03px;font-weight:bold;border-color:#202020;box-shadow:inset 1px 1px 0 #fff;line-height:16.6px;">19</div>
<div class="hdr" style="left:2.00px;top:453.07px;width:25.70px;height:17.03px;line-height:16.6px;">20</div>
<div class="hdr" style="left:2.00px;top:470.10px;width:25.70px;height:17.03px;line-height:16.6px;">21</div>
<div class="hdr" style="left:2.00px;top:487.13px;width:25.70px;height:17.03px;line-height:16.6px;">22</div>
<div class="hdr" style="left:2.00px;top:504.16px;width:25.70px;height:17.03px;line-height:16.6px;">23</div>
<div class="hdr" style="left:2.00px;top:521.19px;width:25.70px;height:17.03px;line-height:16.6px;">24</div>
<div class="a" style="left:0.00px;top:111.00px;width:1.00px;height:427.22px;background:#808080;"></div>
<div class="a" style="left:1.00px;top:112.00px;width:1.00px;height:426.22px;background:#000;"></div>
<div class="a" style="left:28.20px;top:129.50px;width:216.00px;height:16.00px;background:#fff;"></div>
<div class="cell" style="left:28.20px;top:129.50px;padding-left:2px;">Exercício de Estatística - Análise Descritiva</div>
<div class="cell" style="left:28.20px;top:146.53px;width:63.00px;text-align:center;">Dia útil</div>
<div class="cell" style="left:92.20px;top:146.53px;width:88.00px;text-align:center;">Cotações (R$)</div>
<div class="cell" style="left:28.20px;top:163.56px;width:63.00px;text-align:right;padding-right:2px;">1</div>
<div class="cell" style="left:92.20px;top:163.56px;width:88.00px;text-align:right;padding-right:2px;">24,04</div>
<div class="cell" style="left:28.20px;top:180.59px;width:63.00px;text-align:right;padding-right:2px;">2</div>
<div class="cell" style="left:92.20px;top:180.59px;width:88.00px;text-align:right;padding-right:2px;">25,70</div>
<div class="cell" style="left:28.20px;top:197.62px;width:63.00px;text-align:right;padding-right:2px;">3</div>
<div class="cell" style="left:92.20px;top:197.62px;width:88.00px;text-align:right;padding-right:2px;">23,14</div>
<div class="cell" style="left:28.20px;top:214.65px;width:63.00px;text-align:right;padding-right:2px;">4</div>
<div class="cell" style="left:92.20px;top:214.65px;width:88.00px;text-align:right;padding-right:2px;">22,87</div>
<div class="cell" style="left:28.20px;top:231.68px;width:63.00px;text-align:right;padding-right:2px;">5</div>
<div class="cell" style="left:92.20px;top:231.68px;width:88.00px;text-align:right;padding-right:2px;">23,42</div>
<div class="cell" style="left:28.20px;top:248.71px;width:63.00px;text-align:right;padding-right:2px;">6</div>
<div class="cell" style="left:92.20px;top:248.71px;width:88.00px;text-align:right;padding-right:2px;">23,96</div>
<div class="cell" style="left:28.20px;top:265.74px;width:63.00px;text-align:right;padding-right:2px;">7</div>
<div class="cell" style="left:92.20px;top:265.74px;width:88.00px;text-align:right;padding-right:2px;">25,69</div>
<div class="cell" style="left:28.20px;top:282.77px;width:63.00px;text-align:right;padding-right:2px;">8</div>
<div class="cell" style="left:92.20px;top:282.77px;width:88.00px;text-align:right;padding-right:2px;">26,78</div>
<div class="cell" style="left:28.20px;top:299.80px;width:63.00px;text-align:right;padding-right:2px;">9</div>
<div class="cell" style="left:92.20px;top:299.80px;width:88.00px;text-align:right;padding-right:2px;">26,88</div>
<div class="cell" style="left:28.20px;top:316.83px;width:63.00px;text-align:right;padding-right:2px;">10</div>
<div class="cell" style="left:92.20px;top:316.83px;width:88.00px;text-align:right;padding-right:2px;">27,05</div>
<div class="cell" style="left:28.20px;top:333.86px;width:63.00px;text-align:right;padding-right:2px;">11</div>
<div class="cell" style="left:92.20px;top:333.86px;width:88.00px;text-align:right;padding-right:2px;">27,05</div>
<div class="cell" style="left:28.20px;top:350.89px;width:63.00px;text-align:right;padding-right:2px;">12</div>
<div class="cell" style="left:92.20px;top:350.89px;width:88.00px;text-align:right;padding-right:2px;">26,12</div>
<div class="cell" style="left:28.20px;top:367.92px;width:63.00px;text-align:right;padding-right:2px;">13</div>
<div class="cell" style="left:92.20px;top:367.92px;width:88.00px;text-align:right;padding-right:2px;">24,60</div>
<div class="cell" style="left:28.20px;top:384.95px;width:63.00px;text-align:right;padding-right:2px;">14</div>
<div class="cell" style="left:92.20px;top:384.95px;width:88.00px;text-align:right;padding-right:2px;">23,56</div>
<div class="cell" style="left:28.20px;top:401.98px;width:63.00px;text-align:right;padding-right:2px;">15</div>
<div class="cell" style="left:92.20px;top:401.98px;width:88.00px;text-align:right;padding-right:2px;">23,04</div>
<div class="cell" style="left:28.20px;top:419.01px;width:63.00px;text-align:right;padding-right:2px;">16</div>
<div class="cell" style="left:92.20px;top:419.01px;width:88.00px;text-align:right;padding-right:2px;">21,30</div>
<div class="cell" style="left:28.20px;top:436.04px;width:63.00px;text-align:right;padding-right:2px;">17</div>
<div class="cell" style="left:92.20px;top:436.04px;width:88.00px;text-align:right;padding-right:2px;">21,75</div>
<div class="cell" style="left:28.20px;top:453.07px;width:63.00px;text-align:right;padding-right:2px;">18</div>
<div class="cell" style="left:92.20px;top:453.07px;width:88.00px;text-align:right;padding-right:2px;">21,85</div>
<div class="cell" style="left:28.20px;top:470.10px;width:63.00px;text-align:right;padding-right:2px;">19</div>
<div class="cell" style="left:92.20px;top:470.10px;width:88.00px;text-align:right;padding-right:2px;">22,89</div>
<div class="cell" style="left:28.20px;top:487.13px;width:63.00px;text-align:right;padding-right:2px;">20</div>
<div class="cell" style="left:92.20px;top:487.13px;width:88.00px;text-align:right;padding-right:2px;">23,14</div>
<div class="cell" style="left:28.20px;top:504.16px;width:63.00px;text-align:right;padding-right:2px;">21</div>
<div class="cell" style="left:92.20px;top:504.16px;width:88.00px;text-align:right;padding-right:2px;">21,74</div>
<div class="cell" style="left:28.20px;top:521.19px;width:63.00px;text-align:right;padding-right:2px;">22</div>
<div class="cell" style="left:92.20px;top:521.19px;width:88.00px;text-align:right;padding-right:2px;">20,32</div>
<div class="cell" style="left:245.20px;top:180.59px;width:63.00px;text-align:right;padding-right:2px;">23,95</div>
<div class="cell" style="left:245.20px;top:197.62px;width:63.00px;text-align:right;padding-right:2px;">1,979902</div>
<div class="cell" style="left:245.20px;top:350.89px;width:63.00px;text-align:right;padding-right:2px;">0,08267</div>
<div class="cell" style="left:245.20px;top:436.04px;width:63.00px;text-align:right;padding-right:2px;">23,14</div>
<div class="a" style="left:243.20px;top:434.04px;width:67.00px;height:20.03px;border:3px solid #000"></div>
<div class="a" style="left:305.20px;top:449.07px;width:5px;height:5px;background:#000;border:1px solid #fff;border-right:0;border-bottom:0"></div>
<svg style="left:302.70px;top:180.59px" width="5.5" height="5.5" viewBox="0 0 6 6"><path d="M0 0 L6 0 L6 6 Z" fill="#ff0000"/></svg>
<svg style="left:302.70px;top:197.62px" width="5.5" height="5.5" viewBox="0 0 6 6"><path d="M0 0 L6 0 L6 6 Z" fill="#ff0000"/></svg>
<svg style="left:302.70px;top:350.89px" width="5.5" height="5.5" viewBox="0 0 6 6"><path d="M0 0 L6 0 L6 6 Z" fill="#ff0000"/></svg>
<svg style="left:302.20px;top:437.04px" width="5" height="5" viewBox="0 0 5 5"><path d="M0 0 L5 0 L5 5 Z" fill="#00e8e8"/><path d="M0 0 L2 0 L2 2 Z" fill="#ff0000"/></svg>
<div class="a" style="left:784.60px;top:113.50px;width:13.00px;height:424.72px;background:#e4e4e4;"></div>
<div class="btn" style="left:784.60px;top:113.50px;width:13.00px;height:6.00px;box-shadow:inset 1px 1px 0 #ececec, inset -1px -1px 0 #404040, inset -2px -2px 0 #808080;"></div>
<div class="btn" style="left:784.60px;top:119.50px;width:13.00px;height:12.00px;box-shadow:inset 1px 1px 0 #ececec, inset -1px -1px 0 #404040, inset -2px -2px 0 #808080;"></div>
<svg style="left:787.80px;top:124.00px" width="5.6" height="3.2" viewBox="0 0 7 4"><path d="M0 4 L7 4 L3.5 0 Z" fill="#000"/></svg>
<div class="btn" style="left:784.60px;top:131.50px;width:13.00px;height:193.00px;box-shadow:inset 1px 1px 0 #ececec, inset -1px -1px 0 #404040, inset -2px -2px 0 #808080;"></div>
<div class="btn" style="left:784.60px;top:526.22px;width:13.00px;height:12.00px;box-shadow:inset 1px 1px 0 #ececec, inset -1px -1px 0 #404040, inset -2px -2px 0 #808080;"></div>
<svg style="left:787.80px;top:530.72px" width="5.6" height="3.2" viewBox="0 0 7 4"><path d="M0 0 L7 0 L3.5 4 Z" fill="#000"/></svg>
<div class="a" style="left:798.20px;top:0.00px;width:3.00px;height:600.00px;background:#fff;"></div>
<svg style="left:0;top:0" width="800" height="600" viewBox="0 0 800 600"><path d="M310.2 181.6 L334.8 158.0" stroke="#000" stroke-width="1.15" fill="none"/><path d="M310.2 181.6 L317.4 178.3 L313.8 174.5 Z" fill="#000"/></svg>
<svg style="left:0;top:0" width="800" height="600" viewBox="0 0 800 600"><path d="M310.2 198.6 L322.0 258.5" stroke="#000" stroke-width="1.15" fill="none"/><path d="M310.2 198.6 L309.1 206.5 L314.2 205.5 Z" fill="#000"/></svg>
<svg style="left:0;top:0" width="800" height="600" viewBox="0 0 800 600"><path d="M310.2 351.9 L323.0 340.0" stroke="#000" stroke-width="1.15" fill="none"/><path d="M310.2 351.9 L317.5 348.7 L313.9 344.9 Z" fill="#000"/></svg>
<svg style="left:0;top:0" width="800" height="600" viewBox="0 0 800 600"><path d="M310.2 437.0 L337.5 445.5" stroke="#000" stroke-width="1.15" fill="none"/><path d="M310.2 437.0 L316.6 441.7 L318.1 436.8 Z" fill="#000"/></svg>
<div class="note" style="left:334.80px;top:158.00px;width:212.20px;height:97.60px"><div style="left:2.3px;top:-1.0px">Este é o valor da média para as<br>cotações do mês sob análise. O<br>próximo passo deve ser a<br>verificação de homogeneidade da<br>base de dados. Para tanto deve ser<br>calculado o coeficiente de variação.</div></div>
<div class="note" style="left:322.00px;top:258.50px;width:167.50px;height:74.00px"><div style="left:2.0px;top:0.3px">Este é o valor do desvio-<br>padrão dos dados que será<br>em seguida dividido pela<br>média para gerar o<br>coeficiente de variação.</div></div>
<div class="note" style="left:323.00px;top:340.00px;width:323.00px;height:89.50px"><div style="left:1.8px;top:0.0px">Coeficiente de variação, resultado da divisão do desvio-<br>padrão pela média. Para exibição do valor %, clicar<br>neste símbolo na barra de ferramentas e ajustar para<br>exibição de duas casas decimais, ou na opção Formatar,<br>Células, Números ou então no ícone apropriado também<br>na barra de ferramentas.</div></div>
<div class="note" style="left:337.50px;top:445.50px;width:202.00px;height:84.00px"><div style="left:1.5px;top:-0.4px">O Excel exibe apenas o menor<br>valor caso exista mais de uma<br>moda. Este é um cuidado que se<br>deve tomar, pois, como neste<br>exemplo, em muitas situações há<br>mais de uma moda.</div></div>
<div class="a" style="left:0.00px;top:538.22px;width:798.20px;height:13.20px;background:#c0c0c0;"></div>
<div class="a" style="left:0.00px;top:538.22px;width:1.00px;height:13.20px;background:#808080;"></div>
<div class="a" style="left:1.00px;top:538.22px;width:1.00px;height:13.20px;background:#000;"></div>
<div class="a" style="left:2.50px;top:538.22px;width:11.7px;height:13.20px;background:#c0c0c0;box-shadow:inset 1px 1px 0 #fff, inset -1px -1px 0 #808080"></div>
<svg style="left:2.50px;top:538.72px" width="12" height="12" viewBox="0 0 12 12"><path d="M3.500 3.500v5.500 M8.500 3.500 L5.500 6.250 L8.500 9 Z" fill="#000" stroke="#000" stroke-width="1"/></svg>
<div class="a" style="left:14.20px;top:538.22px;width:11.7px;height:13.20px;background:#c0c0c0;box-shadow:inset 1px 1px 0 #fff, inset -1px -1px 0 #808080"></div>
<svg style="left:14.20px;top:538.72px" width="12" height="12" viewBox="0 0 12 12"><path d="M7.500 3.500 L4.500 6.250 L7.500 9 Z" fill="#000" stroke="#000" stroke-width="1"/></svg>
<div class="a" style="left:25.90px;top:538.22px;width:11.7px;height:13.20px;background:#c0c0c0;box-shadow:inset 1px 1px 0 #fff, inset -1px -1px 0 #808080"></div>
<svg style="left:25.90px;top:538.72px" width="12" height="12" viewBox="0 0 12 12"><path d="M4.500 3.500 L7.500 6.250 L4.500 9 Z" fill="#000" stroke="#000" stroke-width="1"/></svg>
<div class="a" style="left:37.60px;top:538.22px;width:11.7px;height:13.20px;background:#c0c0c0;box-shadow:inset 1px 1px 0 #fff, inset -1px -1px 0 #808080"></div>
<svg style="left:37.60px;top:538.72px" width="12" height="12" viewBox="0 0 12 12"><path d="M8.500 3.500v5.500 M3.500 3.500 L6.500 6.250 L3.500 9 Z" fill="#000" stroke="#000" stroke-width="1"/></svg>
<svg style="left:0;top:538.22px" width="480" height="14" viewBox="0 0 480 14"><path d="M49.500 0 L475 0" stroke="#000" stroke-width="1"/><path d="M49.500 0 L54.500 12 L89.500 12 L94.500 0" fill="#fff" stroke="#000"/><path d="M134 0 L129.500 12 M172.500 0 L168 12" fill="none" stroke="#000" stroke-width="1.2"/><path d="M50.500 0.200 L93.500 0.200" stroke="#fff" stroke-width="1.4"/></svg>
<div class="t" style="left:59.5px;top:538.22px;font-weight:bold;font-size:11px;line-height:12px">Plan1</div>
<div class="t" style="left:99.500px;top:538.22px;font-size:9.3px;line-height:12.5px">Plan2</div>
<div class="t" style="left:139.5px;top:538.22px;font-size:9.3px;line-height:12.5px">Plan3</div>
<div class="btn" style="left:475.00px;top:538.22px;width:3.30px;height:13.20px;box-shadow:inset 1px 1px 0 #ececec, inset -1px -1px 0 #404040, inset -2px -2px 0 #808080;"></div>
<div class="a" style="left:478.30px;top:538.22px;width:306.00px;height:13.20px;background:#e4e4e4;"></div>
<div class="btn" style="left:478.30px;top:538.22px;width:11.70px;height:13.20px;box-shadow:inset 1px 1px 0 #ececec, inset -1px -1px 0 #404040, inset -2px -2px 0 #808080;"></div>
<svg style="left:482.3px;top:541.82px" width="3.2" height="5.6" viewBox="0 0 4 7"><path d="M4 0 L4 7 L0 3.500 Z" fill="#000"/></svg>
<div class="btn" style="left:490.00px;top:538.22px;width:250.50px;height:13.20px;box-shadow:inset 1px 1px 0 #ececec, inset -1px -1px 0 #404040, inset -2px -2px 0 #808080;"></div>
<div class="btn" style="left:768.30px;top:538.22px;width:11.00px;height:13.20px;box-shadow:inset 1px 1px 0 #ececec, inset -1px -1px 0 #404040, inset -2px -2px 0 #808080;"></div>
<svg style="left:771.8px;top:541.82px" width="3.2" height="5.6" viewBox="0 0 4 7"><path d="M0 0 L0 7 L4 3.500 Z" fill="#000"/></svg>
<div class="a" style="left:779.30px;top:538.22px;width:1.20px;height:13.20px;background:#000;"></div>
<div class="btn" style="left:780.50px;top:538.22px;width:4.00px;height:13.20px;box-shadow:inset 1px 1px 0 #ececec, inset -1px -1px 0 #404040, inset -2px -2px 0 #808080;"></div>
<div class="a" style="left:784.60px;top:538.22px;width:13.60px;height:13.20px;background:#c0c0c0;box-shadow:inset 1.4px 1.4px 0 #000"></div>
<div class="a" style="left:0.00px;top:551.42px;width:798.20px;height:22.00px;background:#c0c0c0;"></div>
<div class="a" style="left:0.00px;top:552.02px;width:798.20px;height:1.00px;background:#fff;"></div>
<div class="t" style="left:6px;top:556.92px;font-size:12.3px;letter-spacing:0.25px">Pronto</div>
<div class="sunk" style="left:434.00px;top:556.42px;width:35.00px;height:15px"></div>
<div class="sunk" style="left:472.00px;top:556.42px;width:128.00px;height:15px"></div>
<div class="sunk" style="left:603.50px;top:556.42px;width:30.50px;height:15px"></div>
<div class="sunk" style="left:637.50px;top:556.42px;width:33.50px;height:15px"></div>
<div class="sunk" style="left:674.00px;top:556.42px;width:30.00px;height:15px"></div>
<div class="sunk" style="left:707.00px;top:556.42px;width:32.50px;height:15px"></div>
<div class="sunk" style="left:743.00px;top:556.42px;width:24.50px;height:15px"></div>
<div class="sunk" style="left:771.00px;top:556.42px;width:23.00px;height:15px"></div>
<div class="t" style="left:676.500px;top:557.92px;font-size:11px">NÚM</div>
<div class="a" style="left:427.00px;top:555.42px;width:1.00px;height:16.00px;background:#fff;"></div>
<div class="a" style="left:426.00px;top:555.42px;width:1.00px;height:16.00px;background:#808080;"></div>
<div class="a" style="left:0.00px;top:573.42px;width:798.20px;height:26.58px;background:#c0c0c0;"></div>
<div class="a" style="left:0.00px;top:573.92px;width:798.20px;height:1.00px;background:#fff;"></div>
<div class="btn" style="left:2.50px;top:576.42px;width:61.50px;height:22.00px;"></div>
<svg style="left:6px;top:579.42px" width="17" height="16" viewBox="0 0 16 16"><path d="M5 2 C7 1 9 3 11 2 L10 7 C8 8 6 6 4 7 Z" fill="#e00000" stroke="#000" stroke-width="0.600"/><path d="M11.500 2 C13 2.500 14 2 15 1.500 L14 7 C13 7.500 12 7.500 10.500 7 Z" fill="#00a000" stroke="#000" stroke-width="0.600"/><path d="M4 8 C6 7 8 9 10 8 L9 13 C7 14 5 12 3 13 Z" fill="#0000e0" stroke="#000" stroke-width="0.600"/><path d="M10.500 8 C12 8.500 13 8 14 7.500 L13 13 C12 13.500 11 13.500 9.500 13 Z" fill="#ffff00" stroke="#000" stroke-width="0.600"/><path d="M1 3h2M0 5h3M1 7h2M0 9h2M0 11h2" stroke="#000" stroke-width="1"/></svg>
<div class="t" style="left:24px;top:580.92px;font-weight:bold;font-size:12px">Iniciar</div>
<div class="grip" style="left:69px;top:576.42px;height:22.00px"></div>
<div class="btn" style="left:76.00px;top:576.42px;width:160.50px;height:22.00px;"></div>
<svg style="left:80.00px;top:579.42px" width="16" height="16" viewBox="0 0 16 16"><path d="M1.500 3.500 L6 3.500 L7.500 5 L14.500 5 L14.500 13.500 L1.500 13.500 Z" fill="#ffff00" stroke="#808000"/><circle cx="7" cy="8" r="3" fill="#c0ffff" stroke="#000080" stroke-width="1.200"/><path d="M9.500 10.500 L13 14" stroke="#000080" stroke-width="2"/></svg>
<div class="t" style="left:98.50px;top:580.92px;font-size:11px;">Explorando - EST_UNIDA...</div>
<div class="btn" style="left:238.50px;top:576.42px;width:160.00px;height:22.00px;"></div>
<svg style="left:242.50px;top:579.42px" width="16" height="16" viewBox="0 0 16 16"><text x="0" y="14" font-size="16" font-family="Liberation Serif,serif" font-weight="bold" font-style="italic" fill="#00e0e0" stroke="#000080" stroke-width="0.900">W</text></svg>
<div class="t" style="left:261.00px;top:580.92px;font-size:11px;">Microsoft Word - Estatístic...</div>
<div class="sunk2" style="left:401.50px;top:576.42px;width:159.00px;height:22.00px;background:#e8e8e8"></div>
<svg style="left:406.50px;top:580.42px" width="16" height="16" viewBox="0 0 16 16"><path d="M0.500 2 L4.500 2 L8 6.500 L12 2 L15.500 2 L10 8.500 L15.500 15 L11.500 15 L8 10.500 L4.500 15 L0.500 15 L6 8.500 Z" fill="#00c8c8" stroke="#003030" stroke-width="1.100"/></svg>
<div class="t" style="left:425.00px;top:581.92px;font-size:11px;font-weight:bold;font-size:11.700px;">Microsoft Excel - mód...</div>
<div class="sunk" style="left:664.5px;top:576.42px;width:132.5px;height:22.00px"></div>
<svg style="left:668px;top:579.42px" width="16" height="16" viewBox="0 0 16 16"><path d="M2 6 L5 6 L9 2 L9 14 L5 10 L2 10 Z" fill="#ffff00" stroke="#000" stroke-width="0.800"/><path d="M11 5 C12.500 7 12.500 9 11 11" fill="none" stroke="#808080"/></svg>
<div class="a" style="left:687.00px;top:579.42px;width:16.50px;height:16.00px;background:#000080;"></div>
<div class="t" style="left:689px;top:580.92px;color:#fff;font-size:11.500px">Pt</div>
<svg style="left:704.500px;top:579.42px" width="15" height="16" viewBox="0 0 16 16"><path d="M2 1.500 L14 1.500 L14 8 C14 12 10 14 8 15 C6 14 2 12 2 8 Z" fill="#fff" stroke="#0000c0" stroke-width="1.500"/><path d="M4.500 4 L8 11 L11.500 4" fill="none" stroke="#e00000" stroke-width="2.200"/></svg>
<svg style="left:720px;top:579.42px" width="18" height="16" viewBox="0 0 17 16"><rect x="0.500" y="1.500" width="16" height="13" fill="#ffff00" stroke="#000"/><rect x="1" y="10" width="15" height="4" fill="#e00000"/><path d="M1 3.500h15" stroke="#000" stroke-dasharray="2 1" stroke-width="2"/><rect x="3" y="5.500" width="6" height="4" fill="#000080"/></svg>
<svg style="left:739.500px;top:579.42px" width="17" height="16" viewBox="0 0 16 16"><ellipse cx="8" cy="7" rx="7.500" ry="5.500" fill="#0040ff"/><path d="M4 11 L3 15 L8 12 Z" fill="#0040ff"/><ellipse cx="8" cy="7" rx="2.500" ry="3" fill="#fff"/></svg>
<div class="t" style="left:762px;top:580.92px;font-size:11.500px">10:56</div>
</div></body></html>
